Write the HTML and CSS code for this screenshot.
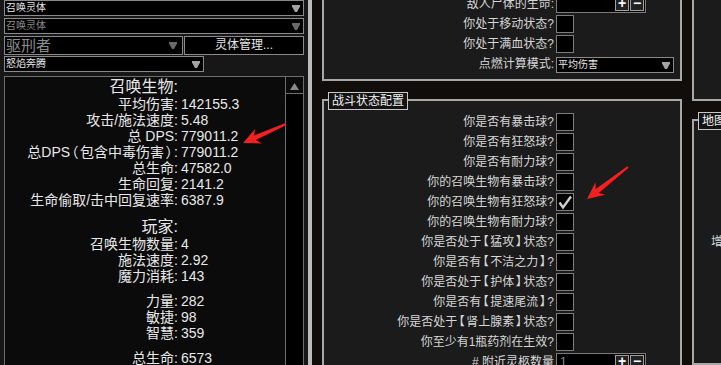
FILE: index.html
```html
<!DOCTYPE html>
<html lang="zh-CN">
<head>
  <meta charset="UTF-8">
  <title>召唤灵体</title>
  <link rel="stylesheet" href="styles.css">
</head>
<body>
  <div class="page">
    <div class="left">
      <div class="select full"><span>召唤灵体</span><svg class="caret" viewBox="0 0 8 7"><path d="M0 0H8V1.5L5 7H3L0 1.5Z"/></svg></div>
      <div class="select full off"><span>召唤灵体</span><svg class="caret" viewBox="0 0 8 7"><path d="M0 0H8V1.5L5 7H3L0 1.5Z"/></svg></div>
      <div class="row3">
        <div class="select big off"><span>驱刑者</span><svg class="caret" viewBox="0 0 8 7"><path d="M0 0H8V1.5L5 7H3L0 1.5Z"/></svg></div>
        <div class="btn">灵体管理...</div>
      </div>
      <div class="select half"><span>怒焰奔腾</span><svg class="caret" viewBox="0 0 8 7"><path d="M0 0H8V1.5L5 7H3L0 1.5Z"/></svg></div>

      <div class="stats">
        <div class="stat-body">
          <div class="grp">
            <div class="hd">召唤生物:</div>
            <div class="k">平均伤害:</div><div class="v">142155.3</div>
            <div class="k">攻击/施法速度:</div><div class="v">5.48</div>
            <div class="k">总 DPS:</div><div class="v">779011.2</div>
            <div class="k">总DPS<span class="pn">（</span>包含中毒伤害<span class="pn">）</span>:</div><div class="v">779011.2</div>
            <div class="k">总生命:</div><div class="v">47582.0</div>
            <div class="k">生命回复:</div><div class="v">2141.2</div>
            <div class="k">生命偷取/击中回复速率:</div><div class="v">6387.9</div>
          </div>
          <div class="grp">
            <div class="hd">玩家:</div>
            <div class="k">召唤生物数量:</div><div class="v">4</div>
            <div class="k">施法速度:</div><div class="v">2.92</div>
            <div class="k">魔力消耗:</div><div class="v">143</div>
          </div>
          <div class="grp">
            <div class="k">力量:</div><div class="v">282</div>
            <div class="k">敏捷:</div><div class="v">98</div>
            <div class="k">智慧:</div><div class="v">359</div>
          </div>
          <div class="grp">
            <div class="k">总生命:</div><div class="v">6573</div>
          </div>
        </div>
        <div class="scrollbar">
          <div class="sb-up"><svg viewBox="0 0 9 7"><path d="M4.5 0L9 7H0Z"/></svg></div>
        </div>
      </div>
    </div>

    <div class="vbar"></div>

    <div class="mid">
      <div class="box box1">
        <div class="lbl">敌人尸体的生命:</div>
        <div class="num"><span></span><b class="pm">+</b><b class="pm">−</b></div>
        <div class="lbl">你处于移动状态?</div><div class="chk"></div>
        <div class="lbl">你处于满血状态?</div><div class="chk"></div>
        <div class="lbl">点燃计算模式:</div>
        <div class="select mode"><span>平均伤害</span><svg class="caret" viewBox="0 0 8 7"><path d="M0 0H8V1.5L5 7H3L0 1.5Z"/></svg></div>
      </div>

      <div class="box box2">
        <div class="legend">战斗状态配置</div>
        <div class="lbl">你是否有暴击球?</div><div class="chk"></div>
        <div class="lbl">你是否有狂怒球?</div><div class="chk"></div>
        <div class="lbl">你是否有耐力球?</div><div class="chk"></div>
        <div class="lbl">你的召唤生物有暴击球?</div><div class="chk"></div>
        <div class="lbl">你的召唤生物有狂怒球?</div>
        <div class="chk"><svg viewBox="0 0 16 16"><path d="M2.5 8.5L6 13.5L14 2.5" /></svg></div>
        <div class="lbl">你的召唤生物有耐力球?</div><div class="chk"></div>
        <div class="lbl">你是否处于<span class="pn">【</span>猛攻<span class="pn">】</span>状态?</div><div class="chk"></div>
        <div class="lbl">你是否有<span class="pn">【</span>不洁之力<span class="pn">】</span>?</div><div class="chk"></div>
        <div class="lbl">你是否处于<span class="pn">【</span>护体<span class="pn">】</span>状态?</div><div class="chk"></div>
        <div class="lbl">你是否有<span class="pn">【</span>提速尾流<span class="pn">】</span>?</div><div class="chk"></div>
        <div class="lbl">你是否处于<span class="pn">【</span>肾上腺素<span class="pn">】</span>状态?</div><div class="chk"></div>
        <div class="lbl">你至少有1瓶药剂在生效?</div><div class="chk"></div>
        <div class="lbl"># 附近灵柩数量</div>
        <div class="num"><span>1</span><b class="pm">+</b><b class="pm">−</b></div>
      </div>
    </div>

    <div class="right">
      <div class="rbox rtop"></div>
      <div class="rbox rmap">
        <div class="legend">地图</div>
        <div class="cut">增</div>
      </div>
    </div>

    <!-- red annotation arrows -->
    <svg class="marks" viewBox="0 0 721 365">
      <polygon transform="translate(243,143) rotate(-23.8)" points="0,0 17,-8 13,-2.5 47,-1 47,1 13,2.5 17,8"/>
      <polygon transform="translate(587,199) rotate(-38)" points="0,0 17,-8 13,-2.5 52,-1 52,1 13,2.5 17,8"/>
    </svg>
  </div>
</body>
</html>
```

FILE: styles.css
```css
body {
  margin: 0;
  background: #100d0b;
  font-family: 'Liberation Sans', 'Noto Sans CJK SC', sans-serif;
}

.page {
  position: relative;
  display: flex;
  width: 721px;
  height: 365px;
  overflow: hidden;
}

/* left column */
.left {
  flex: none;
  width: 300px;
  padding: 0 4px;
  background: #171717;
  display: flex;
  flex-direction: column;
}

.select {
  box-sizing: border-box;
  height: 16px;
  border: 1px solid #8a8a8a;
  background: #000;
  display: flex;
  align-items: center;
  justify-content: space-between;
  padding: 0 3px 0 1px;
  font-size: 10px;
  line-height: 14px;
  color: #e6e6e6;
  white-space: nowrap;
}

.caret {
  width: 8px;
  height: 7px;
  fill: #a3a3a3;
}

.select.off {
  color: #8c8c8c;
}

.select.off .caret {
  fill: #6a6a6a;
}

.full + .full {
  margin-top: 2px;
}

.row3 {
  display: flex;
  gap: 1px;
  margin-top: 2px;
  height: 19px;
}

.select.big {
  width: 179px;
  height: 19px;
  font-size: 15px;
  line-height: 17px;
  padding-right: 5px;
}

.btn {
  box-sizing: border-box;
  width: 120px;
  border: 1px solid #8a8a8a;
  background: #000;
  color: #e6e6e6;
  font-size: 12px;
  line-height: 17px;
  text-align: center;
}

.select.half {
  width: 200px;
  margin-top: 1px;
}

.stats {
  flex: 1;
  margin-top: 4px;
  border: 1px solid #6e6e6e;
  background: #0b0b0b;
  display: flex;
}

.stat-body {
  flex: 1;
  overflow: hidden;
}

.grp {
  display: grid;
  grid-template-columns: 173px 1fr;
  column-gap: 3px;
  font-size: 14px;
  line-height: 16px;
  color: #e8e8e8;
  margin-bottom: 9px;
}

.grp .hd,
.grp .k {
  grid-column: 1;
  text-align: right;
  white-space: nowrap;
}

.grp .hd {
  font-size: 16px;
  line-height: 19px;
}

.grp .v {
  grid-column: 2;
  white-space: nowrap;
}

/* full-width brackets: half-width glyphs with a little air */
.pn {
  font-feature-settings: "halt" 1;
  padding: 0 1.5px;
}

.scrollbar {
  width: 17px;
  border-left: 1px solid #6e6e6e;
  background: #000;
}

.sb-up {
  height: 16px;
  border-bottom: 1px solid #6e6e6e;
  background: #0b0b0b;
  display: flex;
  align-items: center;
  justify-content: center;
}

.sb-up svg {
  width: 9px;
  height: 7px;
  fill: #8a8a8a;
  margin-top: 2px;
}

.vbar {
  flex: none;
  width: 4px;
  background: #bcbcbc;
}

/* middle column */
.mid {
  flex: none;
  width: 360px;
  margin-left: 10px;
  display: flex;
  flex-direction: column;
}

.box {
  position: relative;
  box-sizing: border-box;
  border: 2px solid #a8a8a8;
  background: #1b1b1b;
  display: grid;
  grid-template-columns: 230px auto;
  grid-auto-rows: 18px;
  column-gap: 2px;
  row-gap: 2px;
  align-items: center;
}

.box1 {
  margin-top: -12px;
  padding: 5px 0 6px;
}

.box2 {
  margin-top: 18px;
  padding-top: 12px;
  flex: 1;
  align-content: start;
}

.lbl {
  text-align: right;
  font-size: 12px;
  line-height: 18px;
  color: #d6d6d6;
  white-space: nowrap;
}

.chk {
  box-sizing: border-box;
  width: 18px;
  height: 18px;
  border: 1px solid #7c7c7c;
  background: #000;
}

.chk svg {
  display: block;
  width: 16px;
  height: 16px;
  fill: none;
  stroke: #cfcfcf;
  stroke-width: 2.4;
}

.num {
  box-sizing: border-box;
  width: 90px;
  height: 18px;
  border: 1px solid #7c7c7c;
  background: #000;
  display: flex;
  align-items: center;
  gap: 1px;
  padding-right: 1px;
  font-size: 12px;
  color: #8c8c8c;
}

.num span {
  flex: 1;
  padding-left: 3px;
}

.pm {
  box-sizing: border-box;
  width: 14px;
  height: 14px;
  border: 1px solid #a0a0a0;
  background: #222;
  color: #fff;
  font-size: 14px;
  line-height: 11px;
  text-align: center;
}

.select.mode {
  width: 118px;
  margin-top: 2px;
  align-self: start;
}

.legend {
  position: absolute;
  left: 4px;
  top: -9px;
  box-sizing: border-box;
  height: 18px;
  padding: 0 3px;
  border: 1px solid #c8c8c8;
  background: #141414;
  color: #f0f0f0;
  font-size: 12px;
  line-height: 16px;
  white-space: nowrap;
}

/* right column */
.right {
  flex: none;
  width: 29px;
  margin-left: 10px;
  overflow: hidden;
  display: flex;
  flex-direction: column;
}

.rbox {
  position: relative;
  box-sizing: border-box;
  width: 60px;
  border: 2px solid #a8a8a8;
  background: #1b1b1b;
}

.rtop {
  margin-top: -12px;
  height: 113px;
}

.rmap {
  margin-top: 18px;
  flex: 1;
}

.cut {
  padding: 114px 0 0 17px;
  font-size: 12px;
  line-height: 14px;
  color: #d6d6d6;
}

.marks {
  position: absolute;
  left: 0;
  top: 0;
  width: 721px;
  height: 365px;
  fill: #f41f1f;
  pointer-events: none;
}
```
